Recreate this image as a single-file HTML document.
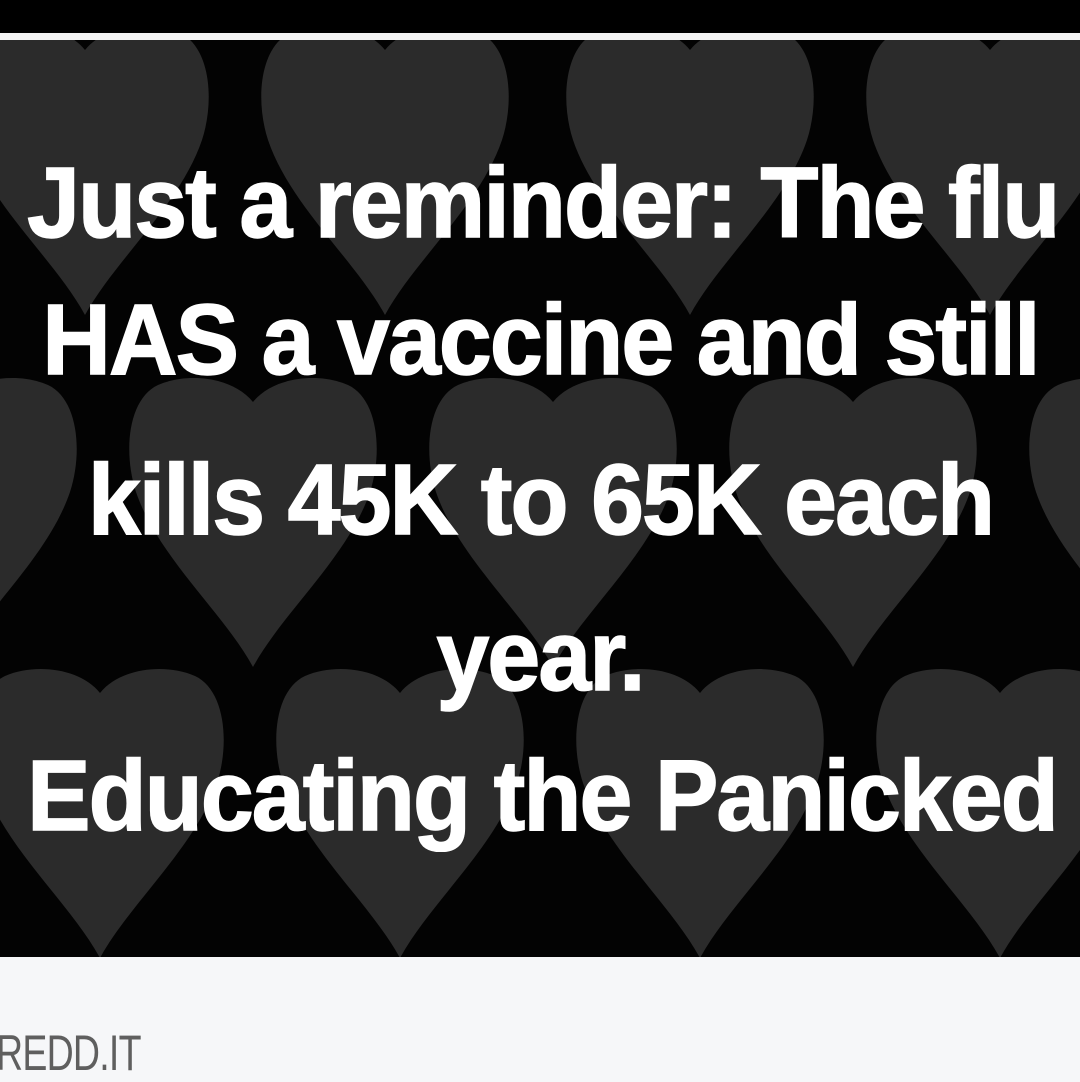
<!DOCTYPE html>
<html><head><meta charset="utf-8"><style>
html,body{margin:0;padding:0;}
body{width:1080px;height:1080px;position:relative;overflow:hidden;background:#f6f7f9;font-family:"Liberation Sans",sans-serif;}
#top{position:absolute;left:0;top:0;width:1080px;height:33px;background:#000;}
#line{position:absolute;left:0;top:33px;width:1080px;height:7px;background:#f4f4f4;}
#dark{position:absolute;left:0;top:40px;width:1080px;height:917px;background:#030303;overflow:hidden;}
.t{position:absolute;left:0;width:1080px;text-align:center;color:#fff;font-weight:bold;font-size:100px;line-height:1;white-space:nowrap;letter-spacing:-2px;-webkit-text-stroke:1.5px #fff;}
.t span{display:inline-block;transform:scaleX(0.95);transform-origin:center;}
#redd{position:absolute;left:-4px;top:1024px;font-size:50px;color:#5f5f5f;font-family:"Liberation Sans Narrow","Liberation Sans",sans-serif;transform:scaleX(0.75);transform-origin:left;letter-spacing:-1px;}
</style></head><body>
<div id="top"></div><div id="line"></div>
<div id="dark">
<svg width="1080" height="917" viewBox="0 40 1080 917" style="position:absolute;left:0;top:0">
<defs><path id="h" d="M125,25 C105,0 60,-5 30,8 C0,22 -5,75 8,115 C30,180 95,235 125,290 C155,235 220,180 242,115 C255,75 250,22 220,8 C190,-5 145,0 125,25Z"/></defs>
<g fill="#2b2b2b">
<use href="#h" x="-40" y="25"/><use href="#h" x="260" y="25"/><use href="#h" x="565" y="25"/><use href="#h" x="865" y="25"/>
<use href="#h" x="-172" y="377"/><use href="#h" x="128" y="377"/><use href="#h" x="428" y="377"/><use href="#h" x="728" y="377"/><use href="#h" x="1028" y="377"/>
<use href="#h" x="-25" y="668"/><use href="#h" x="275" y="668"/><use href="#h" x="575" y="668"/><use href="#h" x="875" y="668"/>
</g></svg>
</div>
<div class="t" style="top:153px"><span>Just a reminder: The flu</span></div>
<div class="t" style="top:290px"><span>HAS a vaccine and still</span></div>
<div class="t" style="top:450px"><span>kills 45K to 65K each</span></div>
<div class="t" style="top:606px"><span>year.</span></div>
<div class="t" style="top:746px"><span>Educating the Panicked</span></div>
<div id="redd">REDD.IT</div>
</body></html>
